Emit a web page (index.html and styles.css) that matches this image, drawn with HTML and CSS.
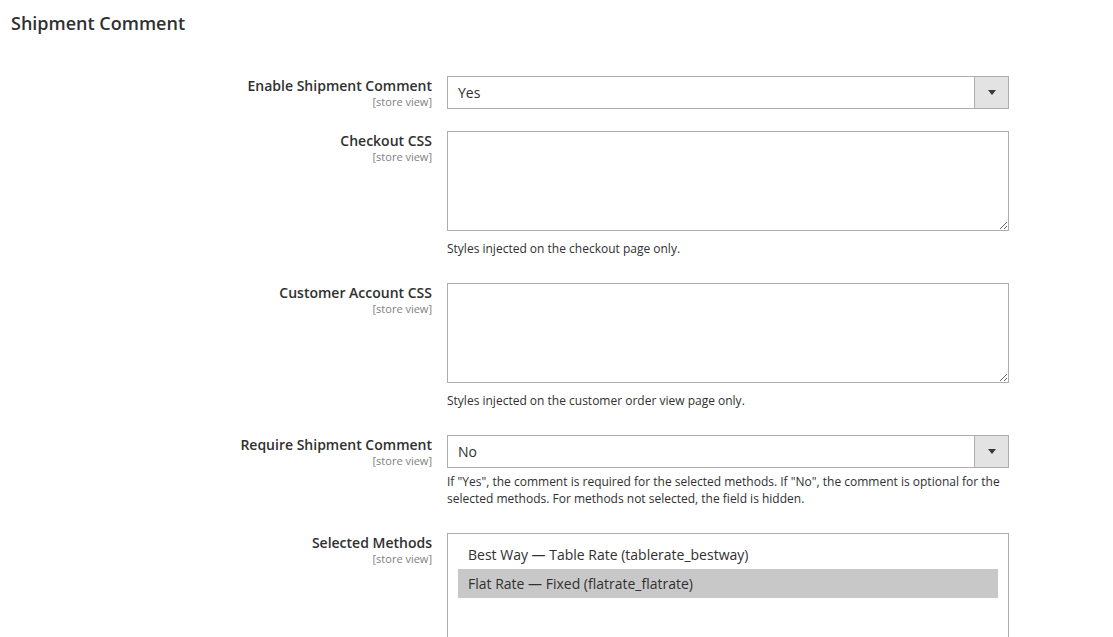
FILE: index.html
```html
<!DOCTYPE html>
<html lang="en">
<head>
<meta charset="utf-8">
<title>Shipment Comment</title>
<link rel="stylesheet" href="styles.css">
</head>
<body>
<section class="config">
  <h2 class="section-title">Shipment Comment</h2>
  <div class="fields">
    <div class="row">
      <div class="label"><span class="label-text">Enable Shipment Comment</span><span class="scope">[store view]</span></div>
      <div class="control">
        <div class="select"><span class="select-value">Yes</span><span class="select-btn"><span class="arrow"></span></span></div>
      </div>
    </div>
    <div class="row">
      <div class="label"><span class="label-text">Checkout CSS</span><span class="scope">[store view]</span></div>
      <div class="control">
        <textarea class="textarea"></textarea>
        <p class="note">Styles injected on the checkout page only.</p>
      </div>
    </div>
    <div class="row">
      <div class="label"><span class="label-text">Customer Account CSS</span><span class="scope">[store view]</span></div>
      <div class="control">
        <textarea class="textarea"></textarea>
        <p class="note">Styles injected on the customer order view page only.</p>
      </div>
    </div>
    <div class="row">
      <div class="label"><span class="label-text">Require Shipment Comment</span><span class="scope">[store view]</span></div>
      <div class="control">
        <div class="select"><span class="select-value">No</span><span class="select-btn"><span class="arrow"></span></span></div>
        <p class="note">If "Yes", the comment is required for the selected methods. If "No", the comment is optional for the selected methods. For methods not selected, the field is hidden.</p>
      </div>
    </div>
    <div class="row">
      <div class="label"><span class="label-text">Selected Methods</span><span class="scope">[store view]</span></div>
      <div class="control">
        <div class="multiselect">
          <div class="option">Best Way — Table Rate (tablerate_bestway)</div>
          <div class="option option-selected">Flat Rate — Fixed (flatrate_flatrate)</div>
        </div>
      </div>
    </div>
  </div>
</section>
</body>
</html>
```
FILE: styles.css
```css
* { box-sizing: border-box; }
html, body { margin: 0; padding: 0; background: #fff; }
body {
  font-family: "Open Sans", "Liberation Sans", sans-serif;
  color: #303030;
  font-size: 14px;
}
.config { padding: 0 0 0 11px; }
.section-title {
  margin: 0;
  padding-top: 11px;
  font-size: 18px;
  font-weight: 600;
  line-height: 24px;
  color: #303030;
}
.fields { padding-top: 41px; }
.row {
  display: grid;
  grid-template-columns: 421px 562px;
  column-gap: 15px;
  padding-bottom: 22px;
}
.label {
  display: flex;
  flex-direction: column;
  align-items: flex-end;
  padding-top: 1px;
}
.label-text {
  font-weight: 600;
  font-size: 14px;
  line-height: 18px;
}
.scope {
  font-size: 11px;
  line-height: 13px;
  color: #808080;
}
.select {
  display: flex;
  height: 33px;
  border: 1px solid #adadad;
  background: #fff;
}
.select-value {
  flex: 1;
  padding-left: 10px;
  line-height: 31px;
}
.select-btn {
  width: 34px;
  background: #e3e3e3;
  border-left: 1px solid #adadad;
  display: flex;
  align-items: center;
  justify-content: center;
}
.arrow {
  width: 0;
  height: 0;
  border-left: 4px solid transparent;
  border-right: 4px solid transparent;
  border-top: 5px solid #41362f;
}
.textarea {
  display: block;
  width: 562px;
  height: 100px;
  margin: 0;
  border: 1px solid #adadad;
  border-radius: 0;
  padding: 6px 10px;
  font-family: inherit;
  font-size: 14px;
  resize: vertical;
}
.note {
  margin: 9px 0 4px;
  font-size: 12px;
  line-height: 17px;
}
.select + .note { margin-top: 5px; }
.multiselect {
  height: 140px;
  border: 1px solid #adadad;
  padding: 6px 10px;
}
.option {
  height: 29px;
  line-height: 29px;
  padding-left: 10px;
}
.option-selected { background: #c8c8c8; }
```
